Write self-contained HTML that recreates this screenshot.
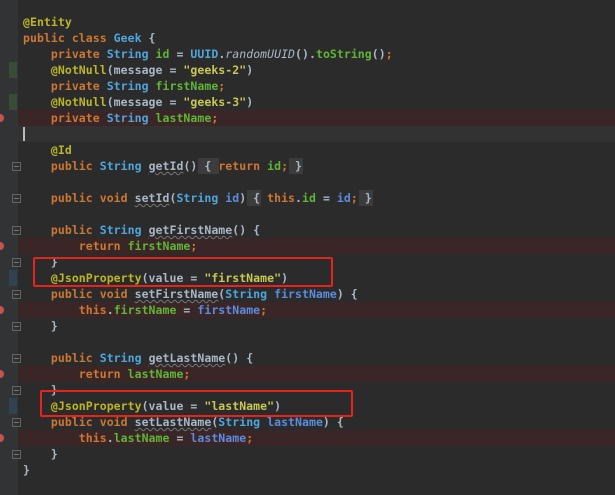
<!DOCTYPE html>
<html><head><meta charset="utf-8"><style>
body{margin:0;width:615px;height:495px;background:#2b2b2b;overflow:hidden;position:relative;font-family:"DejaVu Sans Mono","Liberation Mono",monospace;font-size:11.5px;font-weight:bold;color:#a9b7c6}
.g{position:absolute;left:0;top:0;width:18px;height:495px;background:#313335}
.l{position:absolute;left:23px;height:16px;line-height:16px;white-space:pre;letter-spacing:0.05px}
.bg{position:absolute;left:18px;right:0;height:16px}
.k{color:#cc7832}.t{color:#4ea6dc}.f{color:#5fb636}.a{color:#bbb529}.s{color:#c9c855}.p{color:#5c8bdf}.i{font-style:italic;font-weight:normal}.m{color:#5fb636}
.u{text-decoration:underline wavy #777;text-decoration-thickness:1px}
.box{position:absolute;border:2px solid #e8231b;border-radius:2px}
.dot{position:absolute;left:-4px;width:8px;height:8px;border-radius:50%;background:#c75450}
.gm{position:absolute;left:9px;width:8px;height:16px;background:#384c38}
.bm{position:absolute;left:9px;width:8px;height:16px;background:#33424f}
.fd{position:absolute;left:12px;width:7px;height:7px;border:1px solid #666}
.fd:after{content:"";position:absolute;left:1px;top:3px;width:5px;height:1px;background:#777}
.fb{position:absolute;background:#3c3c3c}
</style></head><body>
<div class="g"></div>
<div class="bg" style="top:110px;background:#3b2627"></div>
<div class="bg" style="top:126px;background:#323232"></div>
<div class="bg" style="top:238px;background:#3b2627"></div>
<div class="bg" style="top:302px;background:#3b2627"></div>
<div class="bg" style="top:366px;background:#3b2627"></div>
<div class="bg" style="top:430px;background:#3b2627"></div>
<div style="position:absolute;left:23px;top:127px;width:2px;height:14px;background:#bbb"></div>
<div class="gm" style="top:62px"></div><div class="gm" style="top:94px"></div>
<div class="bm" style="top:270px"></div><div class="bm" style="top:398px"></div>
<div class="dot" style="top:114px"></div><div class="dot" style="top:242px"></div><div class="dot" style="top:306px"></div><div class="dot" style="top:370px"></div><div class="dot" style="top:434px"></div>
<div class="fd" style="top:162px"></div><div class="fd" style="top:194px"></div><div class="fd" style="top:226px"></div><div class="fd" style="top:258px"></div><div class="fd" style="top:290px"></div><div class="fd" style="top:322px"></div><div class="fd" style="top:354px"></div><div class="fd" style="top:386px"></div><div class="fd" style="top:418px"></div><div class="fd" style="top:450px"></div>
<div class="fb" style="left:198px;top:158px;width:21px;height:16px"></div><div class="fb" style="left:289px;top:158px;width:14px;height:16px"></div>
<div class="fb" style="left:247px;top:190px;width:14px;height:16px"></div><div class="fb" style="left:359px;top:190px;width:14px;height:16px"></div>
<div class="l" style="top:14px"><span class="a">@Entity</span></div>
<div class="l" style="top:30px"><span class="k">public class </span><span class="t">Geek</span> {</div>
<div class="l" style="top:46px">    <span class="k">private </span><span class="t">String </span><span class="f">id</span> = <span class="t">UUID</span>.<span class="i">randomUUID</span>().<span class="m">toString</span>()<span class="k">;</span></div>
<div class="l" style="top:62px">    <span class="a">@NotNull</span>(message = <span class="s">"geeks-2"</span>)</div>
<div class="l" style="top:78px">    <span class="k">private </span><span class="t">String </span><span class="f">firstName</span><span class="k">;</span></div>
<div class="l" style="top:94px">    <span class="a">@NotNull</span>(message = <span class="s">"geeks-3"</span>)</div>
<div class="l" style="top:110px">    <span class="k">private </span><span class="t">String </span><span class="f">lastName</span><span class="k">;</span></div>
<div class="l" style="top:142px">    <span class="a">@Id</span></div>
<div class="l" style="top:158px">    <span class="k">public </span><span class="t">String </span><span class="u">getId</span>() { <span class="k">return </span><span class="f">id</span><span class="k">;</span> }</div>
<div class="l" style="top:190px">    <span class="k">public void </span><span class="u">setId</span>(<span class="t">String </span><span class="p">id</span>) { <span class="k">this</span>.<span class="f">id</span> = <span class="p">id</span><span class="k">;</span> }</div>
<div class="l" style="top:222px">    <span class="k">public </span><span class="t">String </span><span class="u">getFirstName</span>() {</div>
<div class="l" style="top:238px">        <span class="k">return </span><span class="f">firstName</span><span class="k">;</span></div>
<div class="l" style="top:254px">    }</div>
<div class="l" style="top:270px">    <span class="a">@JsonProperty</span>(value = <span class="s">"firstName"</span>)</div>
<div class="l" style="top:286px">    <span class="k">public void </span><span class="u">setFirstName</span>(<span class="t">String </span><span class="p">firstName</span>) {</div>
<div class="l" style="top:302px">        <span class="k">this</span>.<span class="f">firstName</span> = <span class="p">firstName</span><span class="k">;</span></div>
<div class="l" style="top:318px">    }</div>
<div class="l" style="top:350px">    <span class="k">public </span><span class="t">String </span><span class="u">getLastName</span>() {</div>
<div class="l" style="top:366px">        <span class="k">return </span><span class="f">lastName</span><span class="k">;</span></div>
<div class="l" style="top:382px">    }</div>
<div class="l" style="top:398px">    <span class="a">@JsonProperty</span>(value = <span class="s">"lastName"</span>)</div>
<div class="l" style="top:414px">    <span class="k">public void </span><span class="u">setLastName</span>(<span class="t">String </span><span class="p">lastName</span>) {</div>
<div class="l" style="top:430px">        <span class="k">this</span>.<span class="f">lastName</span> = <span class="p">lastName</span><span class="k">;</span></div>
<div class="l" style="top:446px">    }</div>
<div class="l" style="top:462px">}</div>
<div class="box" style="left:33px;top:257px;width:296px;height:26px"></div>
<div class="box" style="left:40px;top:390px;width:309px;height:23px"></div>
</body></html>
